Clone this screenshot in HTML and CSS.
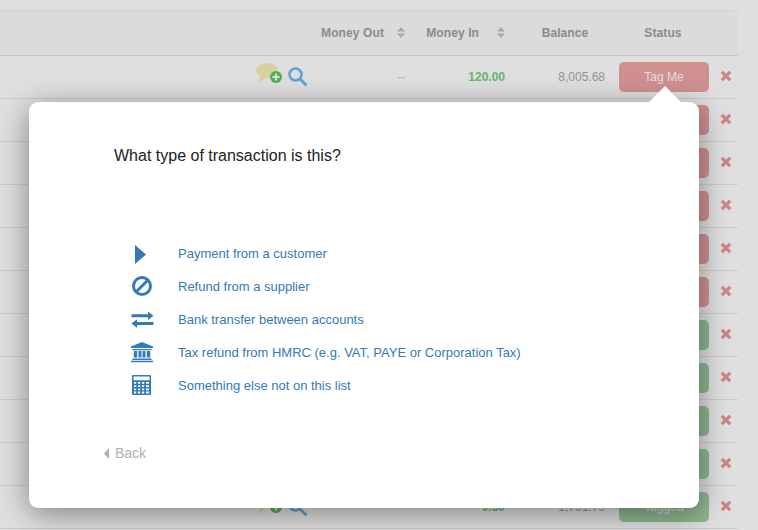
FILE: index.html
```html
<!DOCTYPE html>
<html lang="en">
<head>
<meta charset="utf-8">
<title>Transactions</title>
<link rel="stylesheet" href="styles.css">
</head>
<body>
<svg class="defs" width="0" height="0" aria-hidden="true">
  <defs>
    <symbol id="note" viewBox="0 0 26 22">
      <path d="M11 0C5 0 0 3 0 7.500c0 2.700 1.700 4.800 4.500 6.200-.2 1.600-.9 4.300-2 6.800 2.700-1.200 5-3.500 6.300-5.500 1 .2 1.700.2 2.700.2 6 0 10.500-3.200 10.500-7.700S17 0 11 0z" fill="#f5efb4"/>
      <circle cx="20" cy="14" r="6" fill="#5cc765"/>
      <path d="M20 10.400v7.200M16.400 14h7.200" stroke="#fff" stroke-width="2.200"/>
    </symbol>
    <symbol id="search" viewBox="0 0 19 19">
      <circle cx="7.500" cy="7.500" r="6" fill="none" stroke="#6cbcf2" stroke-width="2.500"/>
      <path d="M11.800 11.800l5.700 5.700" stroke="#6cbcf2" stroke-width="3" stroke-linecap="round"/>
    </symbol>
    <symbol id="cross" viewBox="0 0 12 12">
      <path d="M1.800 1.800l8.400 8.400M10.200 1.800l-8.400 8.400" stroke="#ea9898" stroke-width="3.200"/>
    </symbol>
    <symbol id="sort" viewBox="0 0 8 11">
      <path d="M4 0l4 4.500H0zM4 11L0 6.500h8z" fill="#c0c0c0"/>
    </symbol>
  </defs>
</svg>

<main class="table">
  <div class="row head">
    <div></div>
    <div class="th sorted"><span>Money Out</span><svg class="sort"><use href="#sort"/></svg></div>
    <div class="th sorted wide"><span>Money In</span><svg class="sort"><use href="#sort"/></svg></div>
    <div class="th centre balance-head">Balance</div>
    <div class="th centre status-head">Status</div>
    <div></div>
  </div>
  <div class="row">
    <div class="tools"><svg class="note"><use href="#note"/></svg><svg class="search"><use href="#search"/></svg></div>
    <div class="num muted">--</div><div class="num in">120.00</div><div class="num">8,005.68</div>
    <div class="status"><span class="btn red">Tag Me</span></div><div class="del"><svg class="cross"><use href="#cross"/></svg></div>
  </div>
  <div class="row"><div></div><div></div><div></div><div></div><div class="status"><span class="btn red">Tag Me</span></div><div class="del"><svg class="cross"><use href="#cross"/></svg></div></div>
  <div class="row"><div></div><div></div><div></div><div></div><div class="status"><span class="btn red">Tag Me</span></div><div class="del"><svg class="cross"><use href="#cross"/></svg></div></div>
  <div class="row"><div></div><div></div><div></div><div></div><div class="status"><span class="btn red">Tag Me</span></div><div class="del"><svg class="cross"><use href="#cross"/></svg></div></div>
  <div class="row"><div></div><div></div><div></div><div></div><div class="status"><span class="btn red">Tag Me</span></div><div class="del"><svg class="cross"><use href="#cross"/></svg></div></div>
  <div class="row"><div></div><div></div><div></div><div></div><div class="status"><span class="btn red">Tag Me</span></div><div class="del"><svg class="cross"><use href="#cross"/></svg></div></div>
  <div class="row"><div></div><div></div><div></div><div></div><div class="status"><span class="btn green">Tagged</span></div><div class="del"><svg class="cross"><use href="#cross"/></svg></div></div>
  <div class="row"><div></div><div></div><div></div><div></div><div class="status"><span class="btn green">Tagged</span></div><div class="del"><svg class="cross"><use href="#cross"/></svg></div></div>
  <div class="row"><div></div><div></div><div></div><div></div><div class="status"><span class="btn green">Tagged</span></div><div class="del"><svg class="cross"><use href="#cross"/></svg></div></div>
  <div class="row"><div></div><div></div><div></div><div></div><div class="status"><span class="btn green">Tagged</span></div><div class="del"><svg class="cross"><use href="#cross"/></svg></div></div>
  <div class="row">
    <div class="tools"><svg class="note"><use href="#note"/></svg><svg class="search"><use href="#search"/></svg></div>
    <div class="num muted"></div><div class="num in">9.50</div><div class="num">1,751.79</div>
    <div class="status"><span class="btn green">Tagged</span></div><div class="del"><svg class="cross"><use href="#cross"/></svg></div>
  </div>
</main>

<div class="overlay"></div>

<section class="modal">
  <div class="tip"></div>
  <h1 class="question">What type of transaction is this?</h1>
  <ul class="options">
    <li class="option">
      <svg class="icon" viewBox="0 0 24 24"><path d="M5 3l11 9.500L5 22z"/></svg>
      <a class="link">Payment from a customer</a>
    </li>
    <li class="option">
      <svg class="icon" viewBox="0 0 24 24"><circle cx="12" cy="11" r="8.500" fill="none" stroke="#337ab7" stroke-width="3"/><path d="M6.500 16.500l11-11" stroke="#337ab7" stroke-width="3"/></svg>
      <a class="link">Refund from a supplier</a>
    </li>
    <li class="option">
      <svg class="icon" viewBox="0 0 24 24"><path d="M1.500 6.300h16.500V3.500l5.500 4.300-5.500 4.300V9.300H1.500zM23.500 14H7v-2.800l-5.500 4.300L7 19.800V17h16.500z"/></svg>
      <a class="link">Bank transfer between accounts</a>
    </li>
    <li class="option">
      <svg class="icon" viewBox="0 0 24 24"><path d="M12 1l11 4.500V7H1V5.500zM2.500 8h19v1.200h-19zM3.800 10h3.400v6.500H3.800zM8.500 10h3v6.500h-3zM12.500 10h3v6.500h-3zM16.800 10h3.400v6.500h-3.400zM2.500 17.500h19V19h-19zM1 19.800h22V21.200H1z"/></svg>
      <a class="link">Tax refund from HMRC (e.g. VAT, PAYE or Corporation Tax)</a>
    </li>
    <li class="option">
      <svg class="icon" viewBox="0 0 24 24"><path fill-rule="evenodd" d="M3 1h17a1 1 0 0 1 1 1v18a1 1 0 0 1-1 1H3a1 1 0 0 1-1-1V2a1 1 0 0 1 1-1zM3.500 2.500v3.700h16V2.500zM4 8v1.800h2.200V8zM8 8v1.800h2.200V8zM12 8v1.800h2.200V8zM16 8v1.800h3V8zM4 11.200V13h2.200v-1.800zM8 11.200V13h2.200v-1.800zM12 11.200V13h2.200v-1.800zM16 11.200V13h3v-1.800zM4 14.400v1.800h2.200v-1.800zM8 14.400v1.800h2.200v-1.800zM12 14.400v1.800h2.200v-1.800zM16 14.400v1.800h3v-1.800zM4 17.600v1.800h2.200v-1.800zM8 17.600v1.800h2.200v-1.800zM12 17.600v1.800h2.200v-1.800zM16 17.600v1.800h3v-1.800z"/></svg>
      <a class="link">Something else not on this list</a>
    </li>
  </ul>
  <a class="back"><svg class="back-icon" viewBox="0 0 5 11"><path d="M5 0v11L0 5.500z"/></svg>Back</a>
</section>
</body>
</html>
```

FILE: styles.css
```css
* { box-sizing: border-box; }

html, body {
  margin: 0;
  height: 530px;
  overflow: hidden;
}

body {
  position: relative;
  background: #fff;
  padding-top: 10px;
  font-family: "Liberation Sans", Arial, sans-serif;
  font-size: 12px;
  color: #888;
}

.defs { position: absolute; }

.table {
  width: 738px;
  background: #fff;
  border-top-right-radius: 4px;
}

.row {
  display: grid;
  grid-template-columns: 320px 85px 100px 100px 108px 25px;
  align-items: center;
  height: 43px;
  border-bottom: 1px solid #e8e8e8;
}

.head {
  height: 46px;
  background: #fbfbfb;
  border-top: 1px solid #f4f4f4;
  border-bottom: 1px solid #e0e0e0;
  border-top-right-radius: 4px;
}

.th {
  font-weight: bold;
  color: #a0a0a0;
  letter-spacing: .1px;
  padding-bottom: 1px;
}

.sorted {
  display: flex;
  justify-content: flex-end;
  align-items: center;
}

.sorted span { margin-right: 13px; }
.wide span { margin-right: 18px; }
.centre { text-align: center; }
.balance-head { padding-left: 20px; }
.status-head { padding-left: 8px; }

.sort { width: 8px; height: 11px; }

.tools {
  display: flex;
  justify-content: flex-end;
  align-items: center;
  gap: 6px;
  padding-right: 13px;
}

.note { width: 26px; height: 22px; margin-bottom: 6px; }
.search { width: 19px; height: 19px; margin-bottom: 2px; }

.num { text-align: right; color: #aaa; }
.muted { color: #ccc; }
.in { color: #73d27b; font-weight: bold; }

.status { padding-left: 14px; }

.btn {
  display: flex;
  align-items: center;
  justify-content: center;
  width: 90px;
  height: 30px;
  border-radius: 5px;
  color: #fff;
}

.red { background: #eea5a5; }
.green { background: #a3d2a6; }

.del { display: flex; padding: 0 0 2px 7px; }
.cross { width: 12px; height: 12px; }

.overlay {
  position: absolute;
  inset: 0;
  background: rgba(0, 0, 0, .125);
}

.modal {
  position: absolute;
  left: 29px;
  top: 102px;
  width: 670px;
  height: 406px;
  padding: 45px 0 0 74px;
  background: #fff;
  border-radius: 9px;
  box-shadow: 0 6px 30px rgba(0, 0, 0, .42);
}

.tip {
  position: absolute;
  top: -16px;
  left: 620px;
  width: 0;
  height: 0;
  border-left: 16px solid transparent;
  border-right: 16px solid transparent;
  border-bottom: 16px solid #fff;
}

.question {
  margin: 0 0 0 11px;
  font-size: 16px;
  font-weight: normal;
  line-height: 18px;
  color: #222;
}

.options {
  list-style: none;
  margin: 72px 0 0;
  padding: 0;
}

.option {
  display: flex;
  align-items: center;
  height: 33px;
}

.icon {
  width: 24px;
  height: 24px;
  margin-left: 27px;
  margin-right: 24px;
  fill: #337ab7;
}

.link {
  font-size: 13px;
  color: #337ab7;
}

.back {
  display: flex;
  align-items: center;
  margin: 43px 0 0 0;
  font-size: 14px;
  color: #b0b0b0;
}

.back-icon {
  width: 5px;
  height: 11px;
  margin: 0 6px 0 1px;
  fill: #b0b0b0;
}
```
